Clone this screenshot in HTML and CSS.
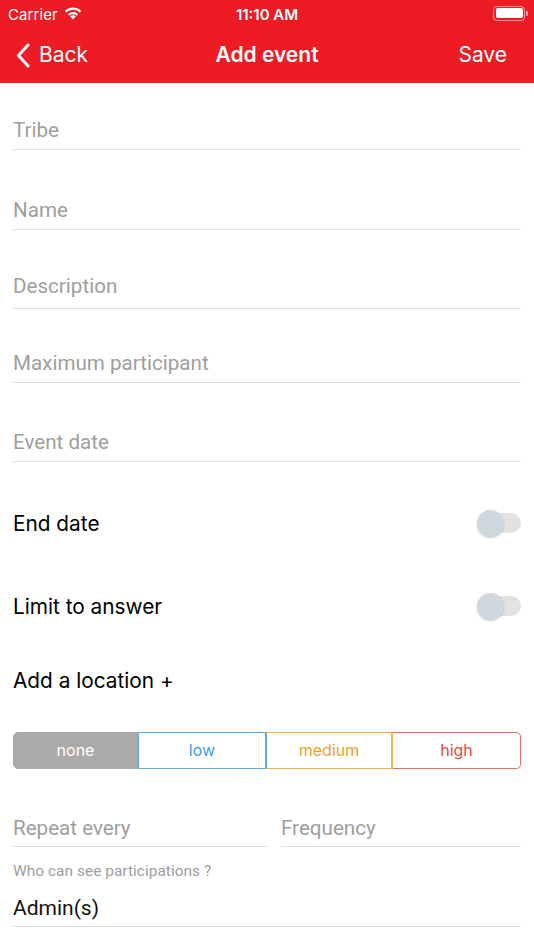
FILE: index.html
```html
<!DOCTYPE html>
<html>
<head>
<meta charset="utf-8">
<link rel="stylesheet" href="styles.css">
</head>
<body>
<header class="topbar">
  <div class="status">
    <div class="status-left">
      <span class="carrier">Carrier</span>
      <svg class="wifi" width="18" height="13" viewBox="0 0 18 13">
        <path d="M9 12.6 L6.2 9.6 A4 4 0 0 1 11.8 9.6 Z" fill="#fff"/>
        <path d="M3.9 7.2 A7.3 7.3 0 0 1 14.1 7.2 L12.6 8.8 A5.2 5.2 0 0 0 5.4 8.8 Z" fill="#fff"/>
        <path d="M0.8 4 A11.6 11.6 0 0 1 17.2 4 L15.7 5.6 A9.4 9.4 0 0 0 2.3 5.6 Z" fill="#fff"/>
      </svg>
    </div>
    <span class="time">11:10 AM</span>
    <div class="battery"><div class="battery-fill"></div><div class="battery-cap"></div></div>
  </div>
  <nav class="navbar">
    <div class="nav-back">
      <svg width="14" height="25" viewBox="0 0 14 25"><path d="M12 2 L2.5 12.5 L12 23" fill="none" stroke="#fff" stroke-width="3" stroke-linecap="round" stroke-linejoin="round"/></svg>
      <span>Back</span>
    </div>
    <div class="nav-title">Add event</div>
    <div class="nav-save">Save</div>
  </nav>
</header>

<main class="form">
  <div class="field f-tribe"><span class="ph">Tribe</span></div>
  <div class="field f-name"><span class="ph">Name</span></div>
  <div class="field f-desc"><span class="ph">Description</span></div>
  <div class="field f-max"><span class="ph">Maximum participant</span></div>
  <div class="field f-date"><span class="ph">Event date</span></div>

  <div class="row r-end">
    <span class="label">End date</span>
    <div class="toggle"><div class="knob"></div></div>
  </div>
  <div class="row r-limit">
    <span class="label">Limit to answer</span>
    <div class="toggle"><div class="knob"></div></div>
  </div>
  <div class="row r-loc">
    <span class="label">Add a location +</span>
  </div>

  <div class="segments">
    <div class="seg seg-none">none</div>
    <div class="seg seg-low">low</div>
    <div class="seg seg-medium">medium</div>
    <div class="seg seg-high">high</div>
  </div>

  <div class="pair">
    <div class="field f-half"><span class="ph">Repeat every</span></div>
    <div class="field f-half"><span class="ph">Frequency</span></div>
  </div>

  <div class="caption">Who can see participations ?</div>
  <div class="field f-admin"><span class="value">Admin(s)</span></div>
</main>
</body>
</html>
```

FILE: styles.css
```css
* { box-sizing: border-box; }
html, body { margin: 0; padding: 0; }
body {
  width: 534px;
  height: 950px;
  background: #fff;
  font-family: Inter, "Liberation Sans", sans-serif;
  overflow: hidden;
}

.topbar {
  background: #ed1c24;
  color: #fff;
  height: 83px;
  display: flex;
  flex-direction: column;
}

.status {
  height: 28px;
  display: flex;
  align-items: center;
  justify-content: space-between;
  padding: 0 8px 0 8px;
  position: relative;
  font-size: 15px;
}
.status-left { display: flex; align-items: center; gap: 6px; }
.carrier { letter-spacing: 0.1px; }
.wifi { margin-top: -2px; }
.time {
  position: absolute;
  left: 0; right: 0;
  text-align: center;
  font-weight: 600;
  pointer-events: none;
}
.battery {
  width: 32px;
  height: 15px;
  border: 1.5px solid rgba(255,255,255,0.55);
  border-radius: 4px;
  padding: 1.5px;
  position: relative;
  margin-right: 1px;
  margin-top: -2px;
}
.battery-fill { width: 100%; height: 100%; background: #fff; border-radius: 2px; }
.battery-cap {
  position: absolute;
  right: -4px; top: 4px;
  width: 2px; height: 5px;
  background: rgba(255,255,255,0.55);
  border-radius: 0 1px 1px 0;
}

.navbar {
  flex: 1;
  display: flex;
  align-items: center;
  justify-content: space-between;
  padding: 0 27px 2px 16px;
  position: relative;
  font-size: 21px;
}
.nav-back { display: flex; align-items: center; gap: 9px; }
.nav-back svg { margin-top: 1px; }
.nav-title {
  position: absolute;
  left: 0; right: 0;
  text-align: center;
  font-weight: 600;
  pointer-events: none;
  padding-bottom: 0;
}

.form {
  padding: 0 13px;
  display: flex;
  flex-direction: column;
}

.field {
  border-bottom: 1px solid #e0e0e0;
  padding-bottom: 7px;
  line-height: 24px;
  font-family: Roboto, "Noto Sans", sans-serif;
  font-size: 20.6px;
}
.ph { color: #9e9e9e; }
.value { color: #111; }

.f-tribe { margin-top: 35px; }
.f-name { margin-top: 48px; }
.f-desc { margin-top: 44px; padding-bottom: 10px; }
.f-max { margin-top: 42px; }
.f-date { margin-top: 47px; }

.row {
  display: flex;
  align-items: center;
  justify-content: space-between;
  height: 30px;
  font-size: 20.8px;
  color: #000;
}
.r-end { margin-top: 46px; }
.r-limit { margin-top: 53px; }
.r-loc { margin-top: 44px; }

.toggle {
  width: 40px;
  height: 20px;
  border-radius: 10px;
  background: #e2e2e2;
  position: relative;
  margin-right: 0;
}
.knob {
  position: absolute;
  left: -4px;
  top: -3.5px;
  width: 27px;
  height: 27px;
  border-radius: 50%;
  background: #cfd8dc;
  box-shadow: 0 1px 2px rgba(0,0,0,0.2);
}

.segments {
  margin-top: 37px;
  display: flex;
  height: 37px;
  font-size: 16px;
  font-family: Inter, "Liberation Sans", sans-serif;
}
.seg {
  flex: 1;
  display: flex;
  align-items: center;
  justify-content: center;
  border: 1.5px solid;
  padding-bottom: 1px;
}
.seg-none {
  background: #aaaaaa;
  border-color: #aaaaaa;
  color: #fff;
  border-radius: 5px 0 0 5px;
  flex: 0 0 125px;
}
.seg-low { color: #3d9be0; border-color: #5aacea; flex: 0 0 128px; }
.seg-medium { color: #f2a01d; border-color: #f7b240; flex: 0 0 126px; }
.seg-high { color: #e84a3f; border-color: #ee6b60; border-radius: 0 5px 5px 0; }
.seg-low { border-left: 1.5px solid #5aacea; }
.seg-medium { border-left: 1.5px solid #5aacea; }
.seg-high { border-left: 1.5px solid #f7b240; }

.pair {
  margin-top: 47px;
  display: grid;
  grid-template-columns: 255px 1fr;
  gap: 13px;
}
.f-half { padding-bottom: 6px; }

.caption {
  margin-top: 15px;
  font-family: Roboto, "Noto Sans", sans-serif;
  font-size: 15.5px;
  color: #9e9e9e;
  line-height: 18px;
}
.f-admin { margin-top: 16px; font-size: 21px; padding-bottom: 6px; }
```
